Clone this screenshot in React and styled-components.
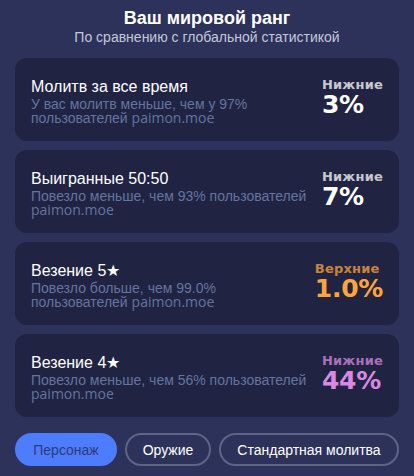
import React from "react";
import styled, { createGlobalStyle } from "styled-components";

const GlobalStyle = createGlobalStyle`
  html, body {
    margin: 0;
    padding: 0;
    background: #2d325a;
  }
  body {
    font-family: "Liberation Sans", Arial, sans-serif;
    color: #ffffff;
  }
`;

const Page = styled.div`
  width: 414px;
  height: 476px;
  box-sizing: border-box;
  padding: 7px 15px 0;
  background: #2d325a;
  display: flex;
  flex-direction: column;
`;

const Header = styled.div`
  text-align: center;
  margin-bottom: 13px;
`;

const Title = styled.div`
  font-size: 18px;
  font-weight: 700;
  line-height: 22px;
`;

const Subtitle = styled.div`
  font-size: 14px;
  color: #c5c8db;
  line-height: 16px;
`;

const List = styled.div`
  display: flex;
  flex-direction: column;
  gap: 9px;
`;

const Card = styled.div`
  height: 83px;
  box-sizing: border-box;
  background: #202442;
  border-radius: 12px;
  padding: 0 16px;
  display: flex;
  align-items: center;
  justify-content: space-between;
`;

const Info = styled.div`
  display: flex;
  flex-direction: column;
  padding-top: 2px;
`;

const CardTitle = styled.div`
  font-size: 16px;
  line-height: 20px;
  color: #ffffff;
`;

const Desc = styled.div`
  font-size: 14px;
  line-height: 14px;
  color: #6474a0;
  white-space: nowrap;
`;

const Latin = styled.span`
  font-family: "Open Sans", sans-serif;
`;

const Rank = styled.div`
  display: flex;
  flex-direction: column;
  align-items: flex-start;
  color: ${(p) => p.$color};
  margin-top: -3px;
`;

const RankLabel = styled.div`
  font-family: "DejaVu Sans", sans-serif;
  font-weight: 700;
  font-size: 13px;
  line-height: 14px;
  opacity: 0.75;
  letter-spacing: 0.2px;
`;

const RankValue = styled.div`
  font-family: "DejaVu Sans", sans-serif;
  font-weight: 700;
  font-size: 25px;
  line-height: 26px;
  letter-spacing: -0.3px;
`;

const Tabs = styled.div`
  display: flex;
  gap: 8px;
  margin-top: 16px;
`;

const Tab = styled.button`
  width: ${(p) => p.$w}px;
  height: 33px;
  border-radius: 17px;
  padding: 0;
  white-space: nowrap;
  font-family: "Liberation Sans", Arial, sans-serif;
  font-size: 14px;
  cursor: pointer;
  border: ${(p) => (p.$active ? "2px solid #4e7cff" : "2px solid #5f6487")};
  background: ${(p) => (p.$active ? "#4e7cff" : "transparent")};
  color: ${(p) => (p.$active ? "#2d3a7a" : "#ffffff")};
`;

const stats = [
  {
    title: "Молитв за все время",
    desc: "У вас молитв меньше, чем у 97%",
    tail: "пользователей ",
    label: "Нижние",
    value: "3%",
    color: "#ffffff",
  },
  {
    title: "Выигранные 50:50",
    desc: "Повезло меньше, чем 93% пользователей",
    tail: "",
    label: "Нижние",
    value: "7%",
    color: "#ffffff",
  },
  {
    title: "Везение 5★",
    desc: "Повезло больше, чем 99.0%",
    tail: "пользователей ",
    label: "Верхние",
    value: "1.0%",
    color: "#ffa53a",
  },
  {
    title: "Везение 4★",
    desc: "Повезло меньше, чем 56% пользователей",
    tail: "",
    label: "Нижние",
    value: "44%",
    color: "#d98ae0",
  },
];

export default function App() {
  return (
    <Page>
      <GlobalStyle />
      <Header>
        <Title>Ваш мировой ранг</Title>
        <Subtitle>По сравнению с глобальной статистикой</Subtitle>
      </Header>
      <List>
        {stats.map((s) => (
          <Card key={s.title}>
            <Info>
              <CardTitle>{s.title}</CardTitle>
              <Desc>
                {s.desc}
                <br />
                {s.tail}
                <Latin>paimon.moe</Latin>
              </Desc>
            </Info>
            <Rank $color={s.color}>
              <RankLabel>{s.label}</RankLabel>
              <RankValue>{s.value}</RankValue>
            </Rank>
          </Card>
        ))}
      </List>
      <Tabs>
        <Tab $active $w={102}>Персонаж</Tab>
        <Tab $w={86}>Оружие</Tab>
        <Tab $w={180}>Стандартная молитва</Tab>
      </Tabs>
    </Page>
  );
}
